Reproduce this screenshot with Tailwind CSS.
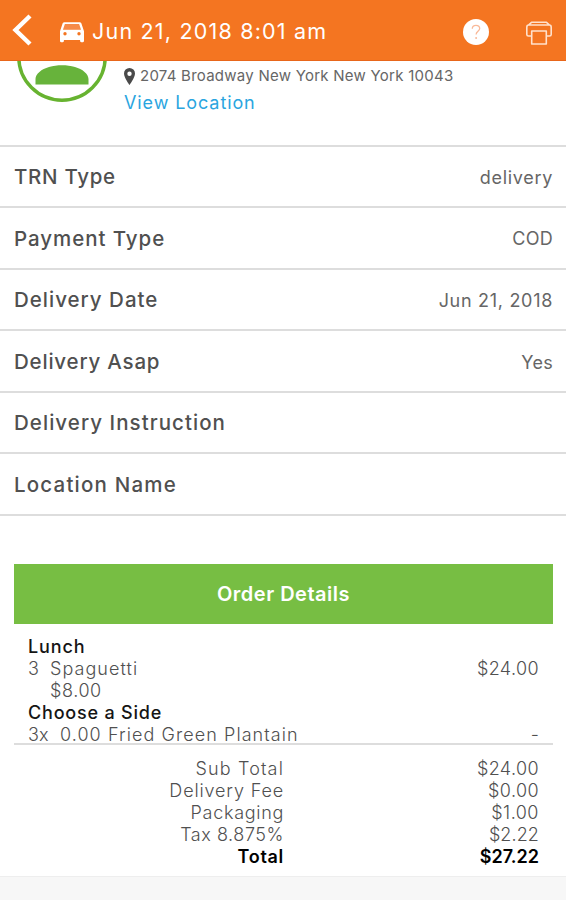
<!DOCTYPE html>
<html lang="en">
<head>
    <meta charset="UTF-8">
    <meta name="viewport" content="width=device-width, initial-scale=1.0">
    <title>Order - Jun 21, 2018 8:01 am</title>
    <script src="https://cdn.jsdelivr.net/npm/@tailwindcss/browser@4"></script>
</head>
<body class="bg-[#f7f7f7] font-[Inter,sans-serif] text-[#666] h-[900px] overflow-hidden">
    <!-- Top bar -->
    <header class="relative z-10 flex items-center h-[60.5px] bg-[#f47521] border-b border-[#e8661a] text-white">
        <svg class="w-5 h-8 ml-3" viewBox="0 0 20 32" fill="none" stroke="currentColor" stroke-width="4.4"><path d="M18 2 3.500 16 18 30"/></svg>
        <svg class="w-6 h-[21px] ml-7 mt-[5px]" viewBox="0 0 24 21"><path d="M4.900 2h14.200l1.900 5.700H3z" fill="#f68a48"/><path fill="currentColor" fill-rule="evenodd" d="M21.500 1.800C21.200.8 20.500.3 19.500.3h-15C3.500.3 2.800.8 2.500 1.800L0 9.200v9.900c0 .7.5 1.100 1.100 1.100h1.600c.7 0 1.200-.4 1.200-1.100V18h16.200v1.100c0 .7.5 1.100 1.200 1.100h1.600c.6 0 1.100-.4 1.100-1.100V9.200zM4.900 2h14.200l1.900 5.700H3zM5 13.500a1.700 1.700 0 1 1 0-3.400 1.700 1.700 0 0 1 0 3.400zm14 0a1.700 1.700 0 1 1 0-3.400 1.700 1.700 0 0 1 0 3.400z"/></svg>
        <h1 class="ml-2 mt-[2px] text-[21.5px] tracking-[1.2px] whitespace-nowrap">Jun 21, 2018 8:01 am</h1>
        <div class="ml-auto mr-[14px] mt-1 flex gap-[37px] items-center">
            <svg class="w-[26px] h-[26px]" viewBox="0 0 26 26"><circle cx="13" cy="13" r="13" fill="#fff"/><path d="M9.300 9.700c0-2 1.600-3.400 3.700-3.400s3.700 1.300 3.700 3.200c0 2.700-3.600 2.900-3.600 6" fill="none" stroke="#f9b999" stroke-width="1.300"/><circle cx="13.100" cy="19" r="1" fill="#f9b999"/></svg>
            <svg class="w-[26px] h-6 mt-[2px]" viewBox="0 0 26 24" fill="none" stroke="#ffe1cc" stroke-width="1.600" stroke-linejoin="round"><path d="M5 15H2.500C1.500 15 .8 14.400 .8 13.500V6.500c0-1.500.7-2.500 1.700-2.500h21c1 0 1.700 1 1.700 2.500v7c0 .9-.7 1.500-1.700 1.500H21M2.500 4 5.500 1.300h15L23.500 4M5.700 10v13h14.600V10z"/></svg>
        </div>
    </header>

    <main class="bg-white h-[816.5px] border-b border-[#eee]">
        <!-- Customer -->
        <section class="relative h-[86px] border-b-2 border-[#ddd] pl-[124px]">
            <svg class="absolute left-[17px] -top-[49px] w-[90px] h-[90px]" viewBox="0 0 90 90"><circle cx="45" cy="45" r="43.200" fill="#fff" stroke="#67b330" stroke-width="3.400"/><path d="M18.500 72.500V67c0-5 6-10 13.500-12 8-2.500 18-2.500 26 0 7.500 2 13.500 7 13.500 12v5.500z" fill="#67b33b"/></svg>
            <div class="flex items-center pt-[5px] h-[27px]">
                <svg class="w-[11px] h-[17px]" viewBox="0 0 11 17"><path fill="#4a4a4a" fill-rule="evenodd" d="M5.500 0A5.500 5.500 0 0 0 0 5.500C0 9.500 5.500 17 5.500 17S11 9.500 11 5.500A5.500 5.500 0 0 0 5.500 0zm0 3.500a2.200 2.200 0 1 1 0 4.400 2.200 2.200 0 0 1 0-4.400z"/></svg>
                <span class="ml-[5px] text-[15px] tracking-[0.25px] whitespace-nowrap">2074 Broadway New York New York 10043</span>
            </div>
            <a class="block mt-[3px] text-[18px] leading-6 tracking-[0.9px] text-[#2aa5e0]">View Location</a>
        </section>

        <!-- Order fields -->
        <ul class="text-[18px]">
            <li class="flex items-center justify-between h-[61.6px] pl-[14px] pr-[13px] pt-[2px] border-b-2 border-[#ddd]"><span class="text-[20.5px] font-medium text-[#505050] tracking-[0.7px]">TRN Type</span><span class="tracking-[0.7px]">delivery</span></li>
            <li class="flex items-center justify-between h-[61.6px] pl-[14px] pr-[13px] pt-[2px] border-b-2 border-[#ddd]"><span class="text-[20.5px] font-medium text-[#505050] tracking-[0.95px]">Payment Type</span><span class="tracking-[0.3px]">COD</span></li>
            <li class="flex items-center justify-between h-[61.6px] pl-[14px] pr-[13px] pt-[2px] border-b-2 border-[#ddd]"><span class="text-[20.5px] font-medium text-[#505050] tracking-[1px]">Delivery Date</span><span class="tracking-[0.7px]">Jun 21, 2018</span></li>
            <li class="flex items-center justify-between h-[61.6px] pl-[14px] pr-[13px] pt-[2px] border-b-2 border-[#ddd]"><span class="text-[20.5px] font-medium text-[#505050] tracking-[0.8px]">Delivery Asap</span><span class="tracking-[0.3px]">Yes</span></li>
            <li class="flex items-center justify-between h-[61.6px] pl-[14px] pr-[13px] pt-[2px] border-b-2 border-[#ddd]"><span class="text-[20.5px] font-medium text-[#505050] tracking-[1.05px]">Delivery Instruction</span></li>
            <li class="flex items-center justify-between h-[61.6px] pl-[14px] pr-[13px] pt-[2px] border-b-2 border-[#ddd]"><span class="text-[20.5px] font-medium text-[#505050] tracking-[1.2px]">Location Name</span></li>
        </ul>

        <!-- Order details -->
        <section class="ml-[14px] mr-[13px] mt-[47.9px]">
            <h2 class="flex items-center justify-center h-[60px] pt-px bg-[#77be43] text-white text-[20px] tracking-[0.5px] font-semibold">Order Details</h2>
            <div class="px-[14px] pt-3 h-[121px] border-b-2 border-[#ddd] text-[18px] leading-[22px] text-[#505050]">
                <p class="font-medium text-[#151515] tracking-[0.9px]">Lunch</p>
                <div class="flex font-light"><span class="w-[22px]">3</span><span class="tracking-[1.05px]">Spaguetti</span><span class="ml-auto tracking-[0.4px]">$24.00</span></div>
                <p class="pl-[22px] font-light tracking-[0.6px]">$8.00</p>
                <p class="font-medium text-[#151515] tracking-[0.8px]">Choose a Side</p>
                <div class="flex font-light"><span class="w-8">3x</span><span class="tracking-[1.07px]">0.00 Fried Green Plantain</span><span class="ml-auto">-</span></div>
            </div>
            <div class="grid grid-cols-[270px_1fr] pr-[14px] pt-[13px] text-right text-[18px] leading-[22px] text-[#505050] font-light">
                <span class="tracking-[1.15px]">Sub Total</span><span class="tracking-[0.4px]">$24.00</span>
                <span class="tracking-[0.85px]">Delivery Fee</span><span class="tracking-[0.4px]">$0.00</span>
                <span class="tracking-[0.7px]">Packaging</span><span class="tracking-[0.5px]">$1.00</span>
                <span class="tracking-[0.55px]">Tax 8.875%</span><span class="tracking-[0.1px]">$2.22</span>
                <span class="font-semibold text-black tracking-[0.7px]">Total</span><span class="font-semibold text-black">$27.22</span>
            </div>
        </section>
    </main>
</body>
</html>
